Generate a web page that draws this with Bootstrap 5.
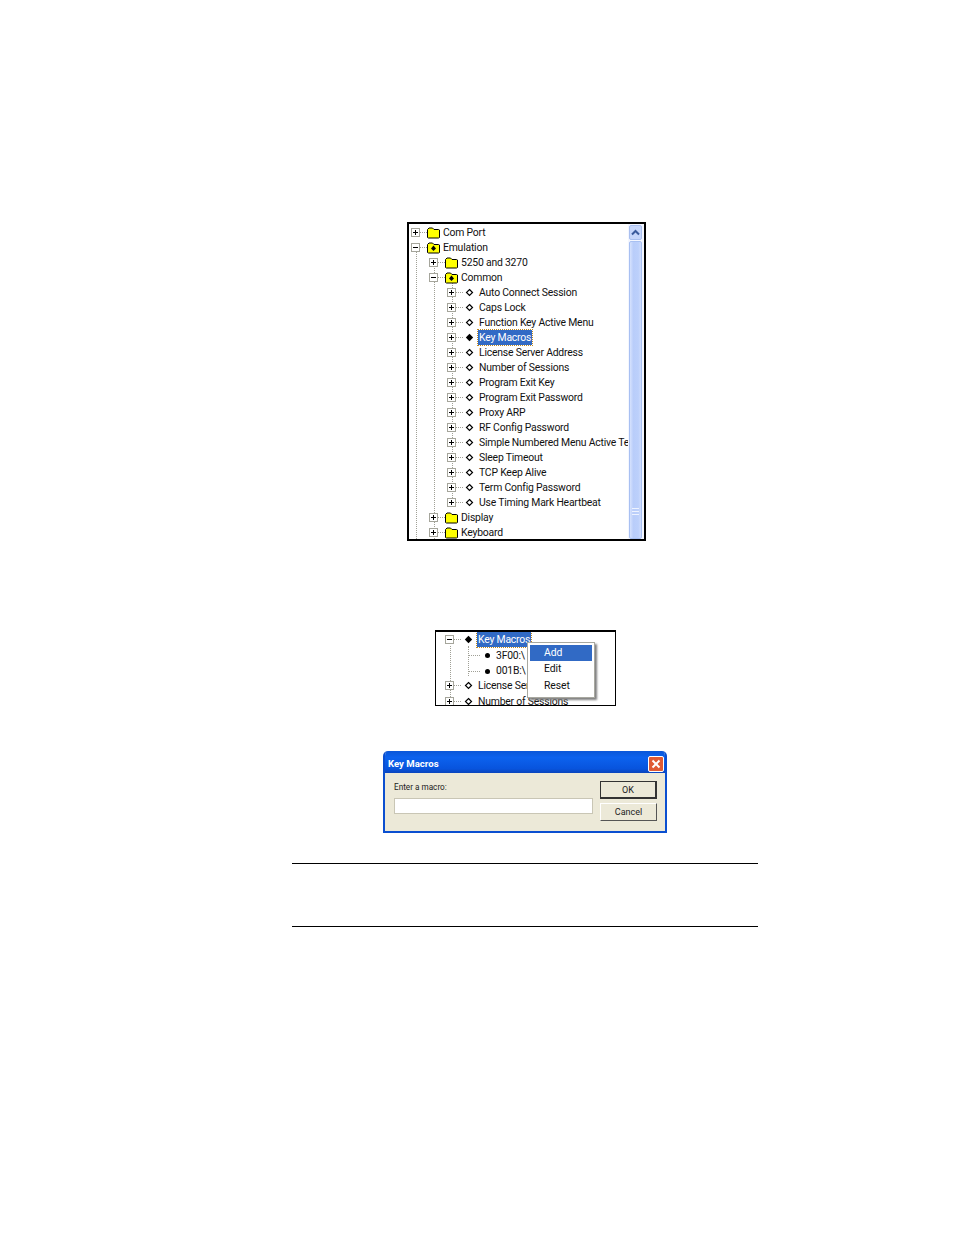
<!doctype html>
<html lang="en">
<head>
<meta charset="utf-8">
<title>Key Macros</title>
<link href="https://cdn.jsdelivr.net/npm/bootstrap@5.3.0/dist/css/bootstrap.min.css" rel="stylesheet">
<style>
body{background:#fff;color:#000;font-family:Roboto,"Liberation Sans",Arial,sans-serif;font-size:11px;margin:0}
.doc-page{padding-top:222px;height:1235px;overflow:hidden}
.tree-shot{margin-left:407px;width:239px;height:319px;border:2px solid #000;background:#fff;position:relative;overflow:hidden}
.tree-pane{min-width:0;flex:1 1 auto;overflow:hidden;position:relative;padding-top:1px}
.tree-row{height:15px;white-space:nowrap;position:relative;line-height:15px}
.lvl0{padding-left:2px}.lvl1{padding-left:20px}.lvl2{padding-left:38px}
.tree-box{flex:none;width:9px;height:9px}
.tree-dash{flex:none;width:7px;border-top:1px dotted #a0a096}
.tree-folder{flex:none;width:13px;height:12px}
.tree-gem{flex:none;width:9px;height:9px;margin:0 3.5px 0 1.5px}
.tree-label{margin-left:2px;padding:0 1px;color:#111;font-size:10.4px;letter-spacing:-.2px}
.gem-row .tree-label{margin-left:1px}
.tree-sel{background:#316ac5;color:#fff;outline:1px dotted #c08a20;height:15px}
.tree-guide{position:absolute;border-left:1px dotted #a0a096;width:0}
.g-a{left:7px;top:24px;bottom:0}
.g-b{left:25px;top:39px;bottom:0}
.g-c{left:43px;top:54px;height:226px}
.scroll-rail{flex:none;width:16px;background:#f3f6ff;padding:1px 2px 0 1px}
.scroll-up{height:15px;background:#c6d6fb;border:1px solid #a9bfef;border-radius:2px}
.scroll-thumb{background:linear-gradient(90deg,#d6e2fd,#b9cdfa 30%,#bcd0fb 75%,#cfdcfc);border:1px solid #a8c0f2;border-radius:2px;margin-top:1px}
.scroll-grip{width:7px;height:7px;background:repeating-linear-gradient(#eef3ff 0 1px,transparent 1px 3px);margin-bottom:23px}
.menu-shot{margin-left:435px;margin-top:89px;width:181px;height:76px;border:1px solid #000;border-top-width:2px;background:#fff;position:relative;overflow:hidden}
.menu-shot .tree-row{height:15.4px;line-height:15.4px}
.menu-shot .lvl2{padding-left:9px}
.menu-shot .lvl3{padding-left:32px;top:.6px}
.menu-shot .tree-gem{margin:0 3px}
.menu-shot .lvl3 .tree-gem{margin-right:2px}
.menu-dash{flex:none;width:12px;border-top:1px dotted #a0a096}
.menu-guide{left:32px;top:14px;height:30px}
.menu-guide-b{left:14px;top:14px;bottom:0}
.menu-pop{position:absolute;left:91px;top:10px;width:68px;height:56px;min-width:0;padding:2px;border:1px solid #a8a8a0;border-radius:0;background:#fff;box-shadow:2px 2px 2px #808080;margin:0;font-size:11px}
.menu-pop .dropdown-item{padding:0 0 0 14px;height:16.4px;line-height:15px;color:#111;font-size:10.4px;letter-spacing:-.1px}
.menu-pop .dropdown-item.active{background:#316ac5;color:#fff}
.dlg-shot{margin-left:383px;margin-top:45px;width:284px;height:82px;background:#ece9d8;border:2px solid #0b4fd0;border-top:0;border-radius:5px 5px 0 0;overflow:hidden}
.dlg-title{height:22px;margin:0 -2px;padding:3px 3px 0 5px;background:linear-gradient(#0a56d8,#0c62ee 30%,#0854dd 80%,#0a45bd);color:#fff;font-weight:700;font-size:9.6px}
.dlg-title span{padding-top:2px}
.dlg-close{width:16px;height:16px;background:#df5a34;border:1px solid #fff;border-radius:2px;padding:0}
.dlg-body{padding:7px 8px 0 9px;gap:7px}
.dlg-main{min-width:0}
.dlg-text{font-size:8.2px;color:#222;line-height:14px;margin-bottom:4px}
.dlg-input{height:16px;min-height:0;padding:0;border:1px solid #c9c6b5;border-radius:0;background:#fff}
.dlg-actions{flex:none;width:57px;margin-top:1px;gap:4px}
.dlg-btn{height:18px;padding:0;font-size:9px;line-height:14px;color:#222;background:#ece9d8;border:1px solid #fff;border-right-color:#555;border-bottom-color:#555;border-radius:0}
.dlg-btn.dlg-default{border:1px solid #333;border-right-width:2px;border-bottom-width:2px}
.rule-box{margin-left:292px;margin-top:30px;width:466px;height:64px;border-top:1px solid #000;border-bottom:1px solid #000}
</style>
</head>
<body>
<svg width="0" height="0" class="d-block">
<symbol id="plus" viewBox="0 0 9 9"><rect x=".5" y=".5" width="8" height="8" fill="#fff" stroke="#a5a59b"/><path d="M2 4.5h5M4.5 2v5" stroke="#000"/></symbol>
<symbol id="minus" viewBox="0 0 9 9"><rect x=".5" y=".5" width="8" height="8" fill="#fff" stroke="#a5a59b"/><path d="M2 4.5h5" stroke="#000"/></symbol>
<symbol id="folder" viewBox="0 0 13 12"><path d="M.5 2.500 2 1h3.500L7 2.500h4.500l1 .5v7.500l-1 .5h-10l-1-.5z" fill="#ffff00" stroke="#000"/></symbol>
<symbol id="folderopen" viewBox="0 0 13 12"><path d="M.5 2.500 2 1h3.500L7 2.500h4.500l1 .5v7.500l-1 .5h-10l-1-.5z" fill="#ffff00" stroke="#000"/><path d="M6.500 3.500 9 6.500 6.500 9 4 6.500z" fill="#000"/></symbol>
<symbol id="gem" viewBox="0 0 9 9"><path d="M4.500 1.500 7.500 4.500 4.500 7.500 1.500 4.500z" fill="#fff" stroke="#000" stroke-width="1.200"/></symbol>
<symbol id="gemfull" viewBox="0 0 9 9"><path d="M4.500 .8 8.200 4.500 4.500 8.200 .8 4.500z" fill="#000"/></symbol>
<symbol id="dot" viewBox="0 0 9 9"><circle cx="4.500" cy="4.500" r="2.500" fill="#000"/></symbol>
</svg>
<main class="doc-page">
  <section class="tree-shot d-flex">
    <div class="tree-pane">
      <span class="tree-guide g-a"></span><span class="tree-guide g-b"></span><span class="tree-guide g-c"></span>
      <div class="tree-row d-flex align-items-center lvl0"><svg class="tree-box"><use href="#plus"/></svg><span class="tree-dash"></span><svg class="tree-folder"><use href="#folder"/></svg><span class="tree-label">Com Port</span></div>
      <div class="tree-row d-flex align-items-center lvl0"><svg class="tree-box"><use href="#minus"/></svg><span class="tree-dash"></span><svg class="tree-folder"><use href="#folderopen"/></svg><span class="tree-label">Emulation</span></div>
      <div class="tree-row d-flex align-items-center lvl1"><svg class="tree-box"><use href="#plus"/></svg><span class="tree-dash"></span><svg class="tree-folder"><use href="#folder"/></svg><span class="tree-label">5250 and 3270</span></div>
      <div class="tree-row d-flex align-items-center lvl1"><svg class="tree-box"><use href="#minus"/></svg><span class="tree-dash"></span><svg class="tree-folder"><use href="#folderopen"/></svg><span class="tree-label">Common</span></div>
      <div class="tree-row gem-row d-flex align-items-center lvl2"><svg class="tree-box"><use href="#plus"/></svg><span class="tree-dash"></span><svg class="tree-gem"><use href="#gem"/></svg><span class="tree-label">Auto Connect Session</span></div>
      <div class="tree-row gem-row d-flex align-items-center lvl2"><svg class="tree-box"><use href="#plus"/></svg><span class="tree-dash"></span><svg class="tree-gem"><use href="#gem"/></svg><span class="tree-label">Caps Lock</span></div>
      <div class="tree-row gem-row d-flex align-items-center lvl2"><svg class="tree-box"><use href="#plus"/></svg><span class="tree-dash"></span><svg class="tree-gem"><use href="#gem"/></svg><span class="tree-label">Function Key Active Menu</span></div>
      <div class="tree-row gem-row d-flex align-items-center lvl2"><svg class="tree-box"><use href="#plus"/></svg><span class="tree-dash"></span><svg class="tree-gem"><use href="#gemfull"/></svg><span class="tree-label tree-sel">Key Macros</span></div>
      <div class="tree-row gem-row d-flex align-items-center lvl2"><svg class="tree-box"><use href="#plus"/></svg><span class="tree-dash"></span><svg class="tree-gem"><use href="#gem"/></svg><span class="tree-label">License Server Address</span></div>
      <div class="tree-row gem-row d-flex align-items-center lvl2"><svg class="tree-box"><use href="#plus"/></svg><span class="tree-dash"></span><svg class="tree-gem"><use href="#gem"/></svg><span class="tree-label">Number of Sessions</span></div>
      <div class="tree-row gem-row d-flex align-items-center lvl2"><svg class="tree-box"><use href="#plus"/></svg><span class="tree-dash"></span><svg class="tree-gem"><use href="#gem"/></svg><span class="tree-label">Program Exit Key</span></div>
      <div class="tree-row gem-row d-flex align-items-center lvl2"><svg class="tree-box"><use href="#plus"/></svg><span class="tree-dash"></span><svg class="tree-gem"><use href="#gem"/></svg><span class="tree-label">Program Exit Password</span></div>
      <div class="tree-row gem-row d-flex align-items-center lvl2"><svg class="tree-box"><use href="#plus"/></svg><span class="tree-dash"></span><svg class="tree-gem"><use href="#gem"/></svg><span class="tree-label">Proxy ARP</span></div>
      <div class="tree-row gem-row d-flex align-items-center lvl2"><svg class="tree-box"><use href="#plus"/></svg><span class="tree-dash"></span><svg class="tree-gem"><use href="#gem"/></svg><span class="tree-label">RF Config Password</span></div>
      <div class="tree-row gem-row d-flex align-items-center lvl2"><svg class="tree-box"><use href="#plus"/></svg><span class="tree-dash"></span><svg class="tree-gem"><use href="#gem"/></svg><span class="tree-label">Simple Numbered Menu Active Te</span></div>
      <div class="tree-row gem-row d-flex align-items-center lvl2"><svg class="tree-box"><use href="#plus"/></svg><span class="tree-dash"></span><svg class="tree-gem"><use href="#gem"/></svg><span class="tree-label">Sleep Timeout</span></div>
      <div class="tree-row gem-row d-flex align-items-center lvl2"><svg class="tree-box"><use href="#plus"/></svg><span class="tree-dash"></span><svg class="tree-gem"><use href="#gem"/></svg><span class="tree-label">TCP Keep Alive</span></div>
      <div class="tree-row gem-row d-flex align-items-center lvl2"><svg class="tree-box"><use href="#plus"/></svg><span class="tree-dash"></span><svg class="tree-gem"><use href="#gem"/></svg><span class="tree-label">Term Config Password</span></div>
      <div class="tree-row gem-row d-flex align-items-center lvl2"><svg class="tree-box"><use href="#plus"/></svg><span class="tree-dash"></span><svg class="tree-gem"><use href="#gem"/></svg><span class="tree-label">Use Timing Mark Heartbeat</span></div>
      <div class="tree-row d-flex align-items-center lvl1"><svg class="tree-box"><use href="#plus"/></svg><span class="tree-dash"></span><svg class="tree-folder"><use href="#folder"/></svg><span class="tree-label">Display</span></div>
      <div class="tree-row d-flex align-items-center lvl1"><svg class="tree-box"><use href="#plus"/></svg><span class="tree-dash"></span><svg class="tree-folder"><use href="#folder"/></svg><span class="tree-label">Keyboard</span></div>
    </div>
    <div class="scroll-rail d-flex flex-column">
      <div class="scroll-up d-flex align-items-center justify-content-center"><svg width="9" height="7" viewBox="0 0 9 7"><path d="M1 5.500 4.500 2 8 5.500" fill="none" stroke="#3a5a9c" stroke-width="2"/></svg></div>
      <div class="scroll-thumb flex-grow-1 d-flex align-items-end justify-content-center"><div class="scroll-grip"></div></div>
    </div>
  </section>

  <section class="menu-shot">
    <span class="tree-guide menu-guide"></span>
    <span class="tree-guide menu-guide-b"></span>
    <div class="tree-row gem-row d-flex align-items-center lvl2"><svg class="tree-box"><use href="#minus"/></svg><span class="tree-dash"></span><svg class="tree-gem"><use href="#gemfull"/></svg><span class="tree-label tree-sel">Key Macros</span></div>
    <div class="tree-row gem-row d-flex align-items-center lvl3"><span class="menu-dash"></span><svg class="tree-gem"><use href="#dot"/></svg><span class="tree-label">3F00:\</span></div>
    <div class="tree-row gem-row d-flex align-items-center lvl3"><span class="menu-dash"></span><svg class="tree-gem"><use href="#dot"/></svg><span class="tree-label">001B:\</span></div>
    <div class="tree-row gem-row d-flex align-items-center lvl2"><svg class="tree-box"><use href="#plus"/></svg><span class="tree-dash"></span><svg class="tree-gem"><use href="#gem"/></svg><span class="tree-label">License Server Address</span></div>
    <div class="tree-row gem-row d-flex align-items-center lvl2"><svg class="tree-box"><use href="#plus"/></svg><span class="tree-dash"></span><svg class="tree-gem"><use href="#gem"/></svg><span class="tree-label">Number of Sessions</span></div>
    <ul class="dropdown-menu d-block menu-pop list-unstyled">
      <li><a class="dropdown-item active" href="#">Add</a></li>
      <li><a class="dropdown-item" href="#">Edit</a></li>
      <li><a class="dropdown-item" href="#">Reset</a></li>
    </ul>
  </section>

  <section class="dlg-shot">
    <header class="dlg-title d-flex align-items-center justify-content-between">
      <span>Key Macros</span>
      <button type="button" class="dlg-close d-flex align-items-center justify-content-center" aria-label="Close"><svg width="10" height="10" viewBox="0 0 10 10"><path d="M1.500 1.500 8.500 8.500M8.500 1.500 1.500 8.500" stroke="#fff" stroke-width="2"/></svg></button>
    </header>
    <div class="dlg-body d-flex">
      <div class="dlg-main flex-grow-1">
        <div class="dlg-text">Enter a macro:</div>
        <input class="form-control dlg-input" type="text" aria-label="Enter a macro">
      </div>
      <div class="dlg-actions d-flex flex-column">
        <button type="button" class="btn dlg-btn dlg-default">OK</button>
        <button type="button" class="btn dlg-btn">Cancel</button>
      </div>
    </div>
  </section>

  <div class="rule-box"></div>
</main>
<script src="https://cdn.jsdelivr.net/npm/bootstrap@5.3.0/dist/js/bootstrap.bundle.min.js"></script>
</body>
</html>
